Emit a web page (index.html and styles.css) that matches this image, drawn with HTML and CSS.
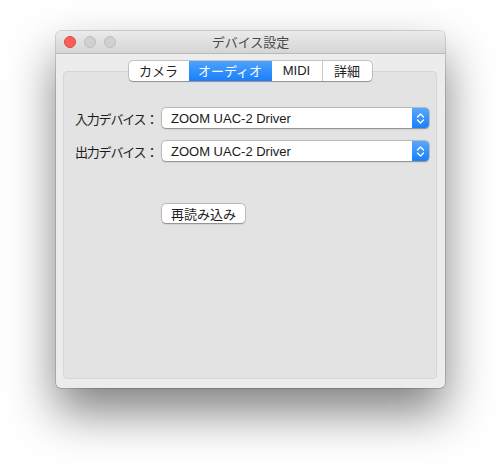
FILE: index.html
```html
<!DOCTYPE html>
<html lang="ja">
<head>
<meta charset="utf-8">
<title>デバイス設定</title>
<link rel="stylesheet" href="styles.css">
</head>
<body>
<div class="window">
  <div class="titlebar">
    <div class="lights">
      <span class="light close"></span>
      <span class="light off"></span>
      <span class="light off"></span>
    </div>
    <div class="title">デバイス設定</div>
  </div>
  <div class="content">
    <div class="groupbox">
      <div class="tabs">
        <div class="tab t1">カメラ</div>
        <div class="tab t2 active">オーディオ</div>
        <div class="tab t3">MIDI</div>
        <div class="tab t4">詳細</div>
      </div>
      <div class="form">
        <div class="row">
          <div class="label">入力デバイス：</div>
          <div class="select">
            <span class="value">ZOOM UAC-2 Driver</span>
            <span class="arrows"><svg width="9" height="13" viewBox="0 0 9 13"><path d="M1.5 5 L4.5 2 L7.5 5 M1.5 8 L4.5 11 L7.5 8" fill="none" stroke="#fff" stroke-width="1.3" stroke-linecap="round" stroke-linejoin="round"/></svg></span>
          </div>
        </div>
        <div class="row">
          <div class="label">出力デバイス：</div>
          <div class="select">
            <span class="value">ZOOM UAC-2 Driver</span>
            <span class="arrows"><svg width="9" height="13" viewBox="0 0 9 13"><path d="M1.5 5 L4.5 2 L7.5 5 M1.5 8 L4.5 11 L7.5 8" fill="none" stroke="#fff" stroke-width="1.3" stroke-linecap="round" stroke-linejoin="round"/></svg></span>
          </div>
        </div>
        <div class="btnrow">
          <div class="button">再読み込み</div>
        </div>
      </div>
    </div>
  </div>
</div>
</body>
</html>
```

FILE: styles.css
```css
html, body {
  margin: 0;
  padding: 0;
  background: #ffffff;
}
body {
  width: 501px;
  height: 468px;
  overflow: hidden;
  font-family: "Liberation Sans", "Noto Sans CJK JP", sans-serif;
  font-size: 13px;
  color: #1a1a1a;
}
.window {
  margin: 31px 0 0 56px;
  width: 389px;
  height: 357px;
  box-sizing: border-box;
  border-radius: 5px;
  background: #ececec;
  box-shadow: 0 0 0 0.5px rgba(0,0,0,0.3), 0 24px 48px rgba(0,0,0,0.5);
  display: flex;
  flex-direction: column;
  overflow: hidden;
}
.titlebar {
  height: 22px;
  flex: none;
  background: linear-gradient(#ebebeb, #d5d5d5);
  border-bottom: 1px solid #b9b9b9;
  display: flex;
  align-items: center;
  position: relative;
}
.lights {
  display: flex;
  gap: 8px;
  padding-left: 8px;
}
.light {
  width: 12px;
  height: 12px;
  border-radius: 50%;
  box-sizing: border-box;
}
.light.close {
  background: #fc5f57;
  border: 0.5px solid #df4744;
}
.light.off {
  background: #d0d0d0;
  border: 0.5px solid #bdbdbd;
}
.title {
  position: absolute;
  left: 0;
  right: 0;
  top: 0;
  line-height: 22px;
  text-align: center;
  font-family: "Noto Sans CJK JP", sans-serif;
  color: #4a4a4a;
  font-size: 13px;
  pointer-events: none;
}
.content {
  flex: 1;
  padding: 17px 8px 9px 7px;
  display: flex;
}
.groupbox {
  flex: 1;
  background: #e3e3e3;
  border: 1px solid #d6d6d6;
  border-radius: 4px;
  display: flex;
  flex-direction: column;
}
.tabs {
  align-self: center;
  margin-top: -11px;
  display: flex;
  height: 20px;
  box-sizing: border-box;
  border-radius: 4px;
  background: #fff;
  box-shadow: 0 0 0 0.5px rgba(0,0,0,0.3), 0 0.5px 1px rgba(0,0,0,0.25);
  overflow: hidden;
}
.tab {
  height: 20px;
  line-height: 20px;
  text-align: center;
  font-family: "Noto Sans CJK JP", sans-serif;
  font-size: 13px;
  color: #222;
  border-left: 1px solid #c8c8c8;
  box-sizing: border-box;
}
.tab.t1 { width: 60px; border-left: none; }
.tab.t2 { width: 83px; }
.tab.t3 { width: 50px; font-family: "Liberation Sans", sans-serif; }
.tab.t4 { width: 50px; }
.tab.active {
  background: linear-gradient(#4ca2fd, #1a7ffa);
  color: #fff;
  border-left: none;
}
.tab.active + .tab { border-left: none; }
.form {
  padding: 27px 7px 0 11px;
  display: flex;
  flex-direction: column;
  gap: 13px;
}
.row {
  display: flex;
  align-items: center;
  height: 20px;
}
.label {
  width: 87px;
  flex: none;
  font-family: "Noto Sans CJK JP", sans-serif;
  font-size: 13px;
  letter-spacing: -1.2px;
  color: #1a1a1a;
}
.select {
  flex: 1;
  height: 20px;
  box-sizing: border-box;
  background: #fff;
  border-radius: 4px;
  box-shadow: 0 0 0 0.5px rgba(0,0,0,0.25), 0 0.5px 1.5px rgba(0,0,0,0.3);
  display: flex;
  align-items: center;
  overflow: hidden;
}
.value {
  flex: 1;
  padding-left: 9px;
  font-family: "Liberation Sans", sans-serif;
  font-size: 13px;
  color: #1a1a1a;
}
.arrows {
  width: 17px;
  height: 20px;
  flex: none;
  background: linear-gradient(#58a9fd, #1b7ffa);
  display: flex;
  align-items: center;
  justify-content: center;
}
.btnrow {
  margin-top: 30px;
  padding-left: 87px;
  display: flex;
}
.button {
  width: 83px;
  height: 19px;
  box-sizing: border-box;
  line-height: 19px;
  text-align: center;
  background: #fff;
  border-radius: 4px;
  box-shadow: 0 0 0 0.5px rgba(0,0,0,0.25), 0 0.5px 1.5px rgba(0,0,0,0.3);
  font-family: "Noto Sans CJK JP", sans-serif;
  font-size: 13px;
  color: #1a1a1a;
}
```
